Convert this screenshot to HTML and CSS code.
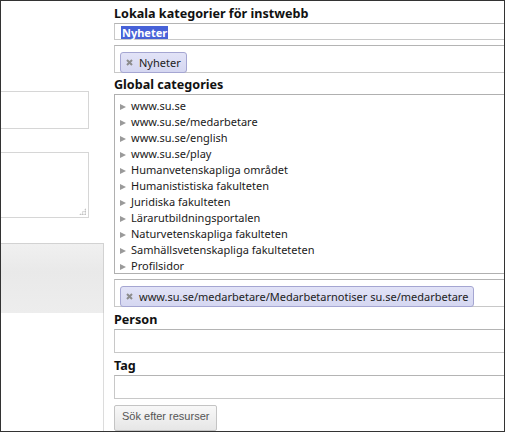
FILE: index.html
```html
<!DOCTYPE html>
<html lang="sv">
<head>
<meta charset="utf-8">
<link rel="stylesheet" href="styles.css">
</head>
<body>
<div class="frame">
  <div class="left">
    <div class="lbox lbox-input"></div>
    <div class="lbox lbox-area"><span class="grip"></span></div>
    <div class="lpanel"></div>
    <div class="lline"></div>
  </div>
  <div class="right">
    <div class="label">Lokala kategorier för instwebb</div>
    <div class="field field-sm"><span class="sel">Nyheter</span></div>
    <div class="field tagbox"><span class="chip"><svg class="x" width="7" height="7" viewBox="0 0 7 7"><path d="M1 1L6 6M6 1L1 6"/></svg>Nyheter</span></div>
    <div class="label label-gap">Global categories</div>
    <ul class="tree">
      <li>www.su.se</li>
      <li>www.su.se/medarbetare</li>
      <li>www.su.se/english</li>
      <li>www.su.se/play</li>
      <li>Humanvetenskapliga området</li>
      <li>Humanististiska fakulteten</li>
      <li>Juridiska fakulteten</li>
      <li>Lärarutbildningsportalen</li>
      <li>Naturvetenskapliga fakulteten</li>
      <li>Samhällsvetenskapliga fakulteteten</li>
      <li>Profilsidor</li>
    </ul>
    <div class="field tagbox"><span class="chip"><svg class="x" width="7" height="7" viewBox="0 0 7 7"><path d="M1 1L6 6M6 1L1 6"/></svg>www.su.se/medarbetare/Medarbetarnotiser su.se/medarbetare</span></div>
    <div class="label label-field">Person</div>
    <div class="field field-lg"></div>
    <div class="label label-field">Tag</div>
    <div class="field field-lg"></div>
    <button class="btn">Sök efter resurser</button>
  </div>
</div>
</body>
</html>
```
FILE: styles.css
```css
html, body {
  margin: 0;
  padding: 0;
  background: #fff;
}
.frame {
  width: 505px;
  height: 432px;
  box-sizing: border-box;
  border: 1px solid #333;
  overflow: hidden;
  display: flex;
  gap: 10px;
  font-family: "Noto Sans", "DejaVu Sans", sans-serif;
  color: #1a1a1a;
}
.left {
  width: 103px;
  flex: none;
  display: flex;
  flex-direction: column;
  padding-top: 90px;
}
.lbox {
  width: 88px;
  box-sizing: border-box;
  border: 1px solid #d6d6d6;
  border-left: none;
  background: #fff;
}
.lbox-input {
  height: 38px;
}
.lbox-area {
  height: 66px;
  margin-top: 23px;
  position: relative;
}
.grip {
  position: absolute;
  right: 2px;
  bottom: 2px;
  width: 7px;
  height: 7px;
  background:
    radial-gradient(circle, #aaa 0.7px, transparent 1px) 0 0 / 2.5px 2.5px;
  clip-path: polygon(100% 0, 100% 100%, 0 100%);
}
.lpanel {
  margin-top: 25px;
  height: 70px;
  box-sizing: border-box;
  border: 1px solid #d2d2d2;
  border-left: none;
  border-bottom: none;
  background: linear-gradient(#f0f0f0, #e9e9e9 40%, #ededed);
}
.lline {
  flex: 1;
  border-right: 1px solid #dcdcdc;
}
.right {
  flex: 1;
  min-width: 0;
  display: flex;
  flex-direction: column;
  padding-top: 4px;
  margin-right: -6px;
}
.label {
  font-weight: bold;
  font-size: 12.6px;
  line-height: 17px;
  height: 17px;
  color: #111;
}
.label-gap {
  margin-top: 3px;
}
.label-field {
  margin-top: 4px;
}
.field {
  box-sizing: border-box;
  border: 1px solid #c8c8c8;
  border-top-color: #b4b4b4;
  background: #fff;
}
.field-sm {
  height: 19px;
  margin-top: 1px;
  padding: 2px 0 0 6px;
  font-size: 11px;
  line-height: 13px;
}
.sel {
  display: inline-block;
  background: #4762d8;
  color: #fff;
  font-weight: bold;
  padding: 0 1px;
}
.tagbox {
  height: 28px;
  margin-top: 5px;
  padding: 3px 0 0 5px;
}
.chip {
  display: inline-flex;
  align-items: center;
  box-sizing: border-box;
  height: 21px;
  padding: 0 5px 0 4px;
  border: 1px solid #a5a6d2;
  border-radius: 3px;
  background: linear-gradient(#e2e3f7, #d5d7f1);
  font-size: 11px;
  color: #222;
  white-space: nowrap;
}
.x {
  flex: none;
  margin: 1px 6px 0 1px;
  stroke: #8c8c8c;
  stroke-width: 2;
  fill: none;
}
.tree {
  list-style: none;
  margin: 1px 0 0;
  padding: 3px 0 0 5px;
  height: 180px;
  box-sizing: border-box;
  border: 1px solid #b0b0b0;
  font-size: 11px;
  line-height: 16px;
  color: #1a1a1a;
}
.tree li::before {
  content: "";
  display: inline-block;
  width: 0;
  height: 0;
  border-left: 6px solid #9a9a9a;
  border-top: 3.5px solid transparent;
  border-bottom: 3.5px solid transparent;
  margin-right: 5px;
  vertical-align: 0px;
}
.field-lg {
  height: 27px;
  margin-top: 1px;
}
.btn {
  align-self: flex-start;
  margin-top: 6px;
  height: 26px;
  padding: 0 7px 4px;
  border: 1px solid #c4c4c4;
  border-radius: 2px;
  background: linear-gradient(#f8f8f8, #e6e6e6);
  font-family: "Liberation Sans", Arial, sans-serif;
  font-size: 11px;
  color: #555;
  text-align: left;
  line-height: 20px;
}
```
